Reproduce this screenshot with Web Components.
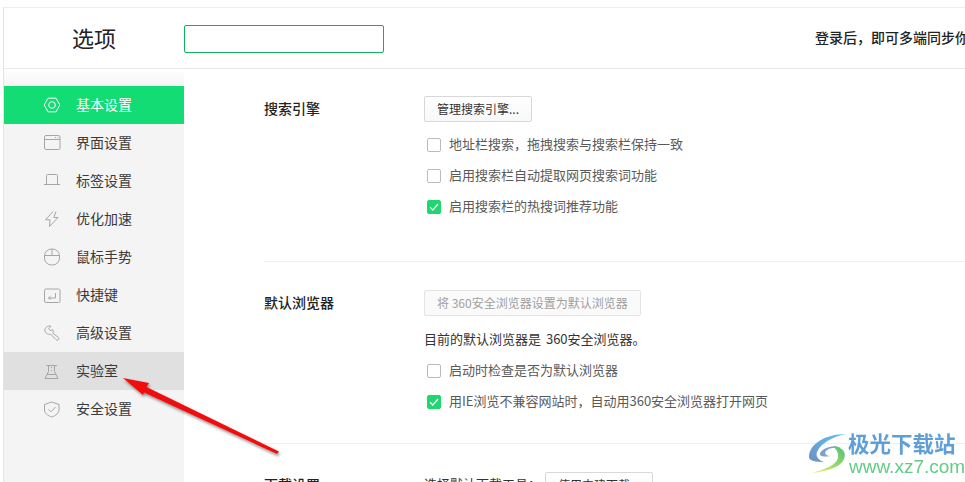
<!DOCTYPE html>
<html lang="zh"><head><meta charset="utf-8">
<style>
html,body{margin:0;width:965px;height:482px;overflow:hidden;background:#fff}
body{font-family:"Noto Sans CJK SC","Liberation Sans",sans-serif}
</style></head><body>
<options-app></options-app>
<script>
const ICONS={
 gear:'<path d="M1.200 9 5 2.200h8L16.800 9 13 15.800H5z"/><circle cx="9" cy="9" r="3.300"/>',
 win:'<rect x="1.500" y="1.500" width="15.500" height="14" rx="1.500"/><path d="M1.500 5.500h15.500"/><path d="M12 3.500h1M14.500 3.500h1"/>',
 tab:'<path d="M3.500 12.500V3.500a1 1 0 0 1 1-1h9a1 1 0 0 1 1 1v9M1 12.500h16"/>',
 bolt:'<path d="M10 1.500 2.500 9.800H7L6.500 16.500 15 7.500H10.800L13 1.500"/>',
 mouse:'<rect x="1.500" y="1" width="15" height="16" rx="7"/><path d="M1.500 7.500h15M9 1v6.500"/>',
 key:'<rect x="1.500" y="3" width="15.500" height="13.500" rx="1.500"/><path d="M12.500 7v5H5.500M7.500 10.300l-2 1.700 2 1.500"/>',
 wrench:'<path d="M8 2.200 5.800 4.600 7.200 6.600 9.700 5.700C10.500 7 10.300 8.300 9.700 9L15.500 13.500C16.300 14.300 16 15.500 15 16 14.300 16.400 13.600 16.200 13 15.600L7.800 10.300C5 10.800 1.700 8.800 1.800 6 1.900 3.500 5 1.200 8 2.200Z"/>',
 flask:'<path d="M3.500 3.500H14M5.500 3.500V9.500L2 16.500H15L11.500 9.500V3.500M4 12.500h9"/><path d="M8.700 5v1M8.700 8v1"/>',
 shield:'<path d="M8.700 2 16 4.500V10C16 13 13 15.500 8.700 17 4.500 15.500 1.500 13 1.500 10V4.500Z"/><path d="M5.500 9.300 8 11.800 12.500 7"/>'
};
class NavItem extends HTMLElement{
 constructor(){super();const s=this.attachShadow({mode:'open'});
  s.innerHTML=`<style>
  :host{display:flex;align-items:center;height:38px;padding-left:39px;font-size:14px;color:var(--c,#3a3a3a);background:var(--b,transparent)}
  :host([active]){--c:#fff;--b:#13dc74;--i:#fff}
  :host([hover]){--b:#e0e0e0}
  svg{width:18px;height:18px;margin-right:15px;fill:none;stroke:var(--i,#a6a6a6);stroke-width:1;flex:none}
  span{margin-top:-2px}
  </style><svg viewBox="0 0 18 18">${ICONS[this.getAttribute('icon')]}</svg><span><slot></slot></span>`;}
}
customElements.define('nav-item',NavItem);
class CheckRow extends HTMLElement{
 constructor(){super();const s=this.attachShadow({mode:'open'});
  s.innerHTML=`<style>
  :host{display:flex;align-items:center;height:31px;padding-left:3px;font-size:13px;color:#5a5a5a;white-space:nowrap}
  .b{box-sizing:border-box;width:14px;height:14px;border:1px solid #bbb;border-radius:2px;margin-right:8px;background:#fff;display:flex;flex:none}
  :host([checked]) .b{background:#1fd66f;border-color:#1fd66f}
  svg{display:none;width:12px;height:12px;fill:none;stroke:#fff;stroke-width:1.200}
  :host([checked]) svg{display:block}
  .t{margin-top:-2px}
  </style><span class="b"><svg viewBox="0 0 12 12"><path d="M2 6.200 4.800 9 10 3"/></svg></span><span class="t"><slot></slot></span>`;}
}
customElements.define('check-row',CheckRow);
class PushBtn extends HTMLElement{
 constructor(){super();const s=this.attachShadow({mode:'open'});
  s.innerHTML=`<style>
  :host{display:flex;align-items:center;box-sizing:border-box;width:max-content;height:26px;padding:0 12px 2px;border:1px solid #d8d8d8;border-radius:2px;background:linear-gradient(#fff,#f8f8f8);font-size:12px;color:#333;white-space:nowrap}
  :host([disabled]){color:#a0a0a0;background:#fafafa;border-color:#e4e4e4}
  </style><slot></slot>`;}
}
customElements.define('push-btn',PushBtn);
class SetSection extends HTMLElement{
 constructor(){super();const s=this.attachShadow({mode:'open'});
  s.innerHTML=`<style>
  :host{display:grid;grid-template-columns:160px 1fr;border-bottom:1px solid var(--line,#f0f0f0);padding:var(--pt,28px) 0 var(--pb,30px)}
  .t{font-size:14px;font-weight:500;color:#222;line-height:24px;white-space:nowrap}
  </style><div class="t"><slot name="title"></slot></div><div class="c"><slot></slot></div>`;}
}
customElements.define('set-section',SetSection);
class WmLogo extends HTMLElement{
 constructor(){super();const s=this.attachShadow({mode:'open'});
  s.innerHTML=`<style>
  :host{position:absolute;left:806px;top:431px;display:flex;filter:blur(.35px)}
  svg{width:44px;height:44px;margin-right:-2px}
  .n{font:700 21.500px/24px "Noto Sans CJK SC",sans-serif;color:#5f9fd8;white-space:nowrap}
  .u{font:500 19px/20px "Liberation Sans",sans-serif;color:#62cc85;margin-top:2px;margin-left:1px;white-space:nowrap}
  </style>
  <svg viewBox="0 0 44 44"><defs>
  <linearGradient id="a" x1="0" y1="1" x2="1" y2="0"><stop offset="0" stop-color="#6f8fc4"/><stop offset="1" stop-color="#5cc4f0"/></linearGradient>
  <linearGradient id="g" x1="0" y1="1" x2="1" y2="0"><stop offset="0" stop-color="#f2ef70"/><stop offset=".5" stop-color="#9bd96c"/><stop offset="1" stop-color="#4bbf78"/></linearGradient></defs>
  <path fill="url(#a)" d="M3 26C3 14 18 3 40 3 26 6 15 12 11 21c-1.500 4 1 8 7 10C10 31 3 30 3 26z"/>
  <path fill="#7fa0c8" d="M14 22c4-6 14-8 21-5-7-1-13 0-15 3-2 2 0 5 4 5-5 1-11 1-10-3z"/>
  <path fill="url(#g)" d="M27 15c9 1 14 6 11 13-3 8-16 12-32 14 14-4 24-8 26-15 1-5-2-9-5-12z"/></svg>
  <div><div class="n">极光下载站</div><div class="u">www.xz7.com</div></div>`;}
}
customElements.define('wm-logo',WmLogo);
class RedArrow extends HTMLElement{
 constructor(){super();const s=this.attachShadow({mode:'open'});
  s.innerHTML=`<style>:host{position:absolute;left:110px;top:365px;display:block}svg{display:block;overflow:visible}</style>
  <svg width="180" height="100" viewBox="110 365 180 100">
  <defs><filter id="f" x="-20%" y="-20%" width="140%" height="150%"><feDropShadow dx="1" dy="2" stdDeviation="1.500" flood-color="#000" flood-opacity=".45"/></filter></defs>
  <path filter="url(#f)" fill="#f00f0f" d="M123 378 149 383 146.500 387 279 451.500 277 454 144 392.500 143 395z"/></svg>`;}
}
customElements.define('red-arrow',RedArrow);
class OptionsApp extends HTMLElement{
 constructor(){super();const s=this.attachShadow({mode:'open'});
  s.innerHTML=`<style>
  :host{display:block;position:relative;width:965px;height:482px;overflow:hidden;background:#fff;color:#333}
  .frame{position:absolute;inset:7px 0 0 3px;box-sizing:border-box;border-top:1px solid #ececec;border-left:1px solid #e4e4e4}
  .app{display:flex;flex-direction:column;height:100%}
  header{display:flex;align-items:center;height:61px;border-bottom:1px solid #e9e9e9;flex:none;box-sizing:border-box}
  .h{width:180px;text-align:center;font-size:22px;color:#222;line-height:1;flex:none;margin-top:-2px}
  .search{box-sizing:border-box;width:200px;height:28px;border:1px solid #10b159;border-radius:2px;flex:none;align-self:flex-start;margin-top:17px}
  .login{margin-left:431px;font-size:14px;font-weight:500;color:#222;white-space:nowrap;margin-top:-2px}
  .body{display:flex;flex:1;min-height:0}
  aside{width:180px;flex:none;background:linear-gradient(#fff,#f4f4f4 17px);padding-top:17px;box-sizing:border-box}
  main{flex:1;padding-left:80px;min-width:0}
  .txt{height:31px;line-height:29px;font-size:13px;color:#333;white-space:nowrap;word-spacing:2px}
  .sel{display:flex;align-items:flex-start;font-size:13px;color:#333;white-space:nowrap}
  .sel span{line-height:24px;margin-right:4px}
  </style>
  <div class="frame"><div class="app">
   <header><div class="h">选项</div><div class="search"></div><div class="login">登录后，即可多端同步你</div></header>
   <div class="body">
    <aside>
     <nav-item icon="gear" active>基本设置</nav-item>
     <nav-item icon="win">界面设置</nav-item>
     <nav-item icon="tab">标签设置</nav-item>
     <nav-item icon="bolt">优化加速</nav-item>
     <nav-item icon="mouse">鼠标手势</nav-item>
     <nav-item icon="key">快捷键</nav-item>
     <nav-item icon="wrench">高级设置</nav-item>
     <nav-item icon="flask" hover>实验室</nav-item>
     <nav-item icon="shield">安全设置</nav-item>
    </aside>
    <main>
     <set-section style="--pt:27px;--pb:39px">
      <span slot="title">搜索引擎</span>
      <push-btn>管理搜索引擎...</push-btn>
      <check-row style="margin-top:7px">地址栏搜索，拖拽搜索与搜索栏保持一致</check-row>
      <check-row>启用搜索栏自动提取网页搜索词功能</check-row>
      <check-row checked>启用搜索栏的热搜词推荐功能</check-row>
     </set-section>
     <set-section style="--pt:28px;--pb:26px">
      <span slot="title">默认浏览器</span>
      <push-btn disabled>将 360安全浏览器设置为默认浏览器</push-btn>
      <div class="txt" style="margin-top:8px">目前的默认浏览器是 360安全浏览器。</div>
      <check-row>启动时检查是否为默认浏览器</check-row>
      <check-row checked>用IE浏览不兼容网站时，自动用360安全浏览器打开网页</check-row>
     </set-section>
     <set-section style="--pt:28px;--pb:0;--line:transparent">
      <span slot="title">下载设置</span>
      <div class="sel"><span>选择默认下载工具：</span><push-btn style="width:108px">使用内建下载</push-btn></div>
     </set-section>
    </main>
   </div>
  </div></div>
  <red-arrow></red-arrow>
  <wm-logo></wm-logo>`;}
}
customElements.define('options-app',OptionsApp);
</script>
</body></html>
